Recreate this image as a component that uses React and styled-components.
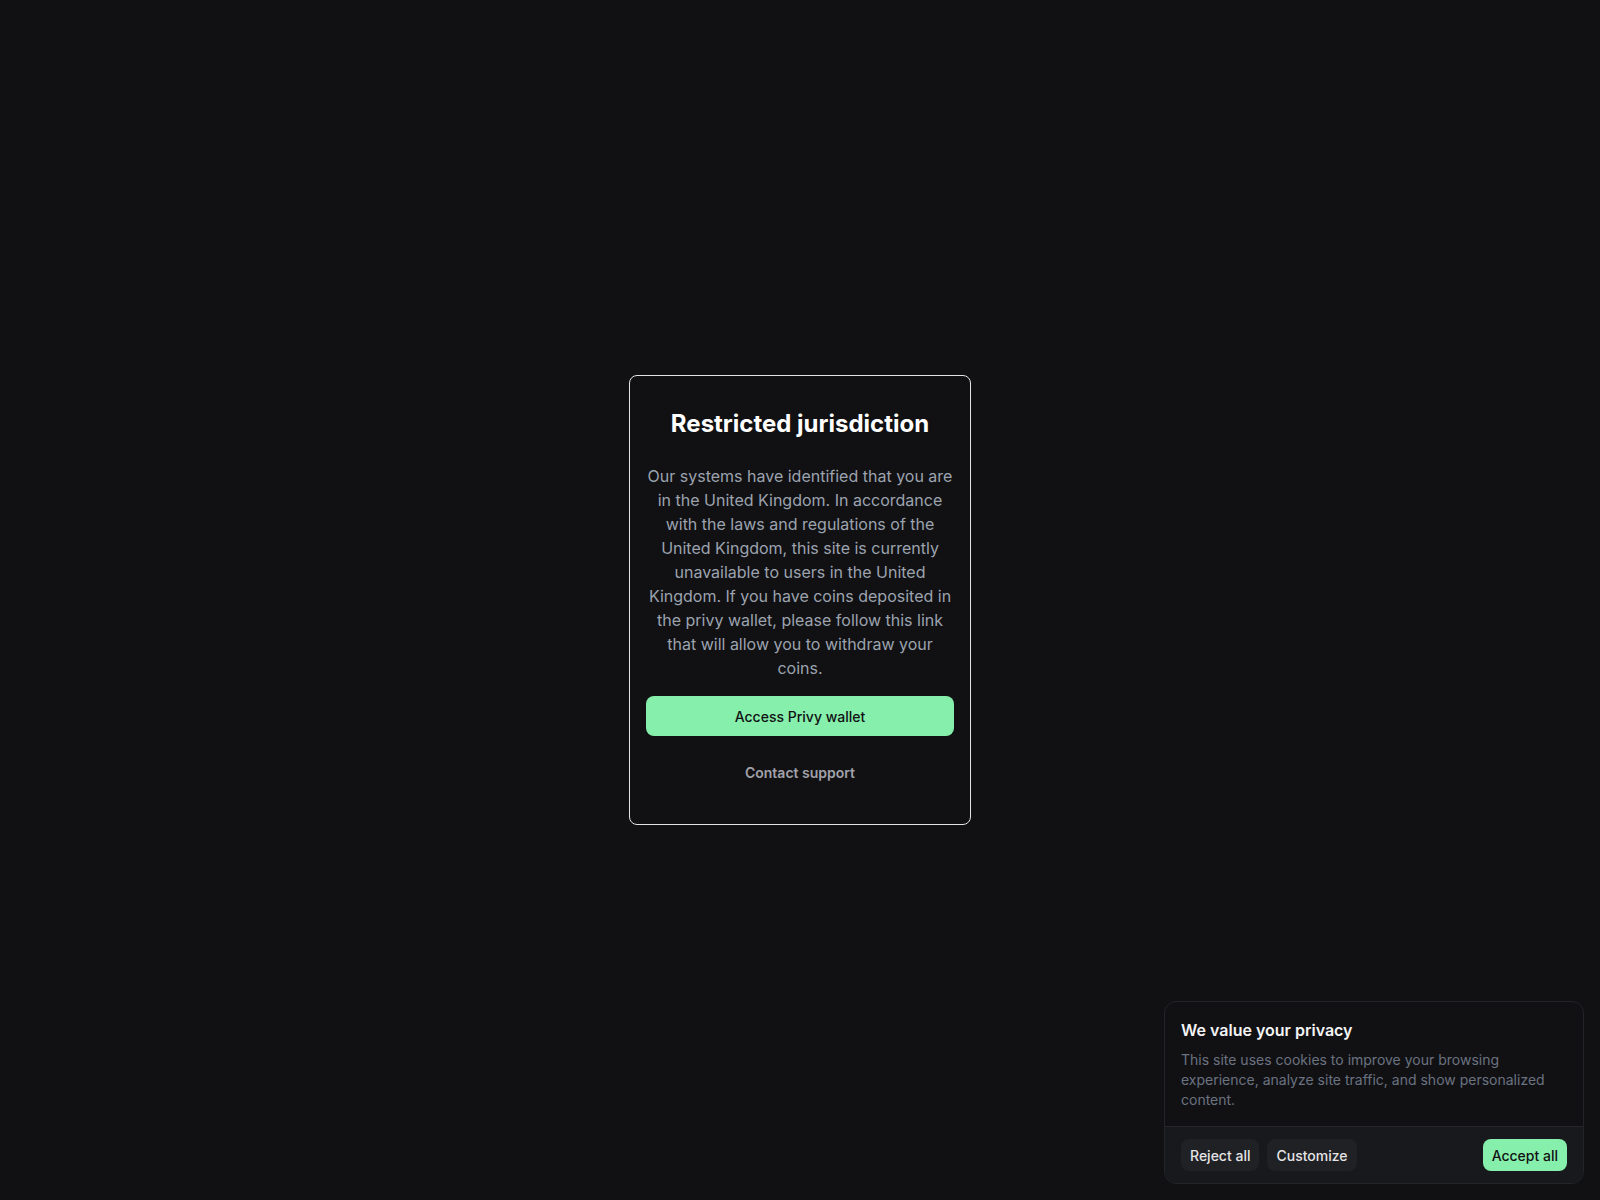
import React from "react";
import styled, { createGlobalStyle } from "styled-components";

const Global = createGlobalStyle`
  html, body { margin: 0; padding: 0; background: #111113; }
  body { font-family: Inter, "Noto Sans", sans-serif; -webkit-font-smoothing: antialiased; }
  * { box-sizing: border-box; }
`;

const Page = styled.div`
  width: 100%;
  min-height: 1200px;
  background: #111113;
  display: flex;
  align-items: flex-start;
  justify-content: center;
  padding-top: 375px;
  position: relative;
`;

const Modal = styled.div`
  width: 342px;
  border: 1px solid #e4e4e7;
  border-radius: 8px;
  background: #111113;
  padding: 32px 16px 32px;
  display: flex;
  flex-direction: column;
  align-items: stretch;
  text-align: center;
`;

const Title = styled.h2`
  margin: 0;
  font-size: 24px;
  line-height: 32px;
  font-weight: 700;
  color: #ffffff;
`;

const Body = styled.p`
  margin: 24px 0 0;
  font-size: 16px;
  line-height: 24px;
  color: #9ca3af;
`;

const Primary = styled.button`
  margin-top: 16px;
  height: 40px;
  border: none;
  border-radius: 8px;
  background: #86efac;
  color: #111113;
  font-family: inherit;
  font-size: 14px;
  font-weight: 500;
  cursor: pointer;
`;

const Ghost = styled.button`
  margin-top: 16px;
  height: 40px;
  border: none;
  background: transparent;
  color: #a1a1aa;
  font-family: inherit;
  font-size: 14px;
  font-weight: 600;
  cursor: pointer;
`;

const Banner = styled.div`
  position: absolute;
  right: 16px;
  bottom: 16px;
  width: 420px;
  border: 1px solid #232428;
  border-radius: 12px;
  background: #111114;
  overflow: hidden;
`;

const BannerBody = styled.div`
  padding: 16px 16px 16px;
`;

const BannerTitle = styled.div`
  font-size: 16px;
  line-height: 24px;
  font-weight: 600;
  color: #f4f4f5;
`;

const BannerText = styled.p`
  margin: 8px 0 0;
  font-size: 14px;
  line-height: 20px;
  color: #6b7280;
`;

const BannerFooter = styled.div`
  border-top: 1px solid #26272b;
  background: #18191c;
  padding: 12px 16px 12px;
  display: flex;
  align-items: center;
  gap: 8px;
`;

const Spacer = styled.div`
  flex: 1;
`;

const SmallButton = styled.button`
  height: 32px;
  padding: 0 9px;
  border: none;
  border-radius: 8px;
  background: ${(p) => (p.$accent ? "#86efac" : "#202125")};
  color: ${(p) => (p.$accent ? "#111113" : "#e4e4e7")};
  font-family: inherit;
  font-size: 14px;
  font-weight: 500;
  cursor: pointer;
`;

export default function App() {
  return (
    <>
      <Global />
      <Page>
        <Modal>
          <Title>Restricted jurisdiction</Title>
          <Body>
            Our systems have identified that you are in the United Kingdom. In
            accordance with the laws and regulations of the United Kingdom, this
            site is currently unavailable to users in the United Kingdom. If you
            have coins deposited in the privy wallet, please follow this link
            that will allow you to withdraw your coins.
          </Body>
          <Primary>Access Privy wallet</Primary>
          <Ghost>Contact support</Ghost>
        </Modal>
        <Banner>
          <BannerBody>
            <BannerTitle>We value your privacy</BannerTitle>
            <BannerText>
              This site uses cookies to improve your browsing experience,
              analyze site traffic, and show personalized content.
            </BannerText>
          </BannerBody>
          <BannerFooter>
            <SmallButton>Reject all</SmallButton>
            <SmallButton>Customize</SmallButton>
            <Spacer />
            <SmallButton $accent>Accept all</SmallButton>
          </BannerFooter>
        </Banner>
      </Page>
    </>
  );
}
